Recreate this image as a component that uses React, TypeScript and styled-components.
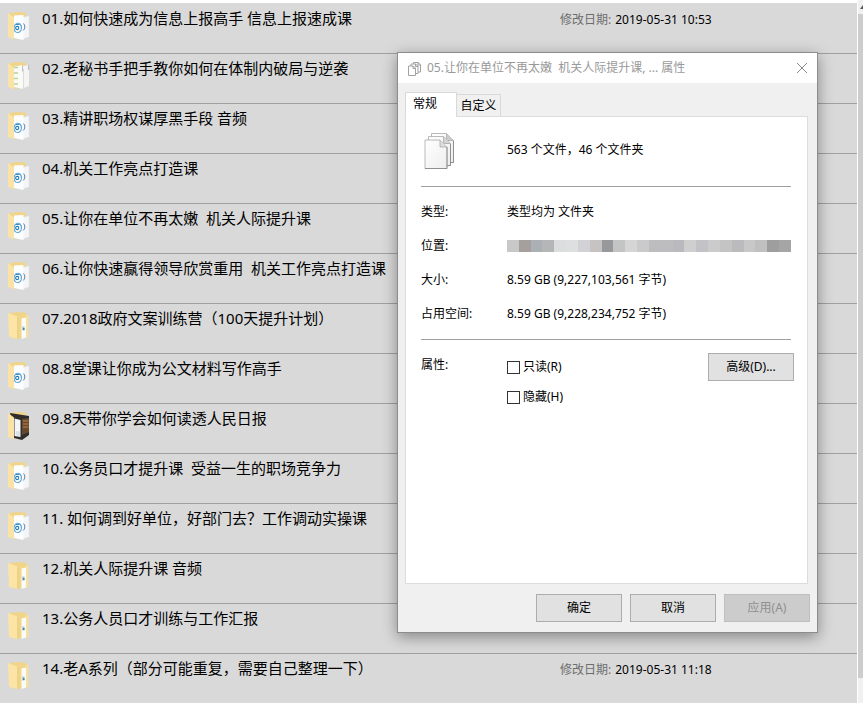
import React from "react";
import styled, { createGlobalStyle } from "styled-components";

const GlobalStyle = createGlobalStyle`
  *, *::before, *::after { box-sizing: border-box; }
  body {
    margin: 0;
    background: #fff;
    color: #000;
    font-family: "Noto Sans", "Noto Sans CJK SC", sans-serif;
    font-size: 12px;
    line-height: 18px;
  }
`;

type FolderKind = "audio" | "list" | "plain" | "dark";

interface Folder {
  name: string;
  kind: FolderKind;
  modified?: string;
}

const folders: Folder[] = [
  { name: "01.如何快速成为信息上报高手 信息上报速成课", kind: "audio", modified: "2019-05-31 10:53" },
  { name: "02.老秘书手把手教你如何在体制内破局与逆袭", kind: "list" },
  { name: "03.精讲职场权谋厚黑手段 音频", kind: "audio" },
  { name: "04.机关工作亮点打造课", kind: "audio" },
  { name: "05.让你在单位不再太嫩  机关人际提升课", kind: "audio" },
  { name: "06.让你快速赢得领导欣赏重用  机关工作亮点打造课", kind: "audio" },
  { name: "07.2018政府文案训练营（100天提升计划）", kind: "plain" },
  { name: "08.8堂课让你成为公文材料写作高手", kind: "audio" },
  { name: "09.8天带你学会如何读透人民日报", kind: "dark" },
  { name: "10.公务员口才提升课  受益一生的职场竞争力", kind: "audio" },
  { name: "11. 如何调到好单位，好部门去？工作调动实操课", kind: "audio" },
  { name: "12.机关人际提升课 音频", kind: "plain" },
  { name: "13.公务人员口才训练与工作汇报", kind: "plain" },
  { name: "14.老A系列（部分可能重复，需要自己整理一下）", kind: "plain", modified: "2019-05-31 11:18" },
];

const mosaic = [
  "#c8c8c8", "#a59f9d", "#aab0b4", "#b5b6b8", "#dcdedd", "#dddfe0", "#d2d2d6", "#c8c3c3",
  "#97989c", "#c4c4c5", "#d5d5d5", "#cacacb", "#bdbdbf", "#bdbdc0", "#b9b9be", "#cfcfcf",
  "#c3c3c7", "#cbcbcb", "#c4c4c5", "#bbbbbd", "#c8c8c9", "#c0c0c0", "#9e9e9e", "#a5a5a5",
];

const Page = styled.main`
  position: relative;
  display: flex;
  min-height: 100vh;
`;

const FileList = styled.ul`
  flex: 1;
  min-width: 0;
  margin: 3px 0 0;
  padding: 0;
  list-style: none;
  background: #d9d9d9;
`;

const FileRow = styled.li`
  display: grid;
  grid-template-columns: 22px minmax(0, 1fr) 297px;
  column-gap: 12px;
  height: 50px;
  padding: 4px 0 0 8px;
  border-top: 1px solid #a0a0a0;

  &:first-child { border-top-color: #d9d9d9; }

  svg { margin-top: 3px; }
`;

const FileName = styled.span`
  font-size: 15px;
  line-height: 20px;
  white-space: pre;
`;

const Modified = styled.span`
  display: flex;
  gap: 4px;
  padding-top: 3px;
  color: #6d6d6d;
  white-space: nowrap;

  time { color: #000; }
`;

const ScrollTrack = styled.div`
  display: flex;
  flex-direction: column;
  width: 6px;
  padding-bottom: 25px;
  border-left: 1px solid #fff;
  background: #f0f0f0;
`;

const ScrollArrow = styled.div`
  display: flex;
  justify-content: flex-end;
  height: 14px;
  padding-top: 5px;
`;

const ScrollThumb = styled.div`
  flex: 1;
  background: #cdcdcd;
`;

const Dialog = styled.section`
  position: absolute;
  top: 52px;
  right: 45px;
  width: 421px;
  border: 1px solid #8c8c8c;
  background: #f0f0f0;
  box-shadow: 0 4px 14px rgba(0, 0, 0, 0.38);
`;

const TitleBar = styled.header`
  display: flex;
  align-items: center;
  gap: 6px;
  height: 30px;
  padding: 0 9px 0 10px;
  background: #fff;
  color: #999;
`;

const Title = styled.h1`
  flex: 1;
  margin: 0;
  font-size: 12px;
  font-weight: 400;
  white-space: pre;
`;

const CloseButton = styled.button`
  display: flex;
  padding: 0;
  border: 0;
  background: none;
`;

const Tabs = styled.div`
  display: flex;
  align-items: flex-end;
  height: 33px;
  padding: 0 7px;
`;

const Tab = styled.button<{ $active?: boolean }>`
  position: relative;
  height: ${(p) => (p.$active ? 25 : 22)}px;
  width: ${(p) => (p.$active ? 52 : 44)}px;
  margin-bottom: ${(p) => (p.$active ? -1 : 0)}px;
  padding: ${(p) => (p.$active ? "0 12px 3px 0" : "0")};
  border: 1px solid #d9d9d9;
  border-bottom: 0;
  border-left-width: ${(p) => (p.$active ? 1 : 0)}px;
  background: ${(p) => (p.$active ? "#fff" : "#f0f0f0")};
  color: #000;
  font: inherit;
`;

const Panel = styled.div`
  min-height: 468px;
  margin: 0 9px 0 7px;
  padding: 0 16px 0 15px;
  border: 1px solid #dcdcdc;
  background: #fff;
`;

const Summary = styled.div`
  display: grid;
  grid-template-columns: 86px 1fr;
  align-items: center;
  height: 70px;
  padding-bottom: 4px;
  border-bottom: 1px solid #a0a0a0;

  svg { margin: 2px 0 0 3px; }
`;

const Details = styled.dl`
  display: grid;
  grid-template-columns: 86px 1fr;
  grid-auto-rows: 34px;
  align-items: center;
  margin: 0;
  padding: 8px 0;
  border-bottom: 1px solid #a0a0a0;

  dd { margin: 0; }
`;

const Mosaic = styled.div`
  display: flex;
  height: 12px;
`;

const MosaicBlock = styled.span<{ $tone: string }>`
  flex: 1;
  background: ${(p) => p.$tone};
`;

const Attributes = styled.fieldset`
  display: grid;
  grid-template-columns: 86px 1fr auto;
  align-items: start;
  margin: 0 -3px 0 0;
  padding: 13px 0 0;
  border: 0;
`;

const AttributeLabel = styled.span`
  padding-top: 3px;
`;

const Checks = styled.div`
  display: grid;
  gap: 12px;
  padding-top: 5px;
`;

const Check = styled.label`
  display: flex;
  align-items: center;
  gap: 3px;
`;

const CheckBox = styled.input`
  appearance: none;
  width: 13px;
  height: 13px;
  margin: 0;
  border: 1px solid #333;
  background: #fff;

  &:checked { background: #333; }
`;

const Button = styled.button`
  width: 86px;
  height: 28px;
  padding: 0;
  border: 1px solid #adadad;
  background: #e1e1e1;
  color: #000;
  font: inherit;

  &:disabled {
    border-color: #bfbfbf;
    background: #ccc;
    color: #8f8f8f;
  }
`;

const Actions = styled.footer`
  display: flex;
  justify-content: flex-end;
  gap: 8px;
  padding: 10px 7px;
`;

function FolderIcon({ kind }: { kind: FolderKind }) {
  return (
    <svg width="22" height="32" viewBox="0 0 22 32" aria-hidden="true">
      <path d="M1 2.500 8 1l9 .5 1 1V26l-12 2z" fill="#f0d48a" />
      {kind === "audio" && (
        <>
          <path d="M14 6.500 21 5V26l-6 2z" fill="#f3f5f8" stroke="#dfe3e8" strokeWidth=".5" />
          <path d="M6 4.500 15.500 4v25L6 27z" fill="#fcfdfe" />
          <path d="M12 13c-3-2-6 .5-6 4s2.500 5.500 5.500 4c2.500-1.500 2.500-6 .5-8" fill="none" stroke="#5ea6d6" strokeWidth="1.100" />
          <path d="M7.500 13.500h4" stroke="#3c91ca" />
          <circle cx="9.200" cy="17" r="1.600" fill="none" stroke="#1f7cc0" strokeWidth="1.100" />
          <path d="M15.500 12.500c1.900 1.500 1.700 5.500-.3 7" fill="none" stroke="#5678a7" strokeWidth=".9" />
        </>
      )}
      {kind === "list" && (
        <>
          <path d="M15 5 21 4v21l-5 2z" fill="#f5f6f4" />
          <path d="M6 5.500 15 4v24l-9-2z" fill="#fafbf7" />
          <path d="M5.500 6.500H10M6 12h4M6 17.500h4M6 23h4" stroke="#b5d894" strokeWidth="1.500" />
          <path d="M14.500 4.500v6M20.500 4v5" stroke="#aaa7bd" strokeWidth=".8" />
          <path d="M15.500 8v20" stroke="#dcdcdc" />
        </>
      )}
      {kind === "plain" && (
        <>
          <path d="M9 6 19 3l1 22-10 3z" fill="#f1d68a" />
          <path d="M13.500 7.500 18 6.500v20l-4.500 1.500z" fill="#fafcfc" />
          <path d="M14 15.500h2.500v4H14z" fill="#a9cfdf" />
          <path d="M15 17h1.500v2H15z" fill="#4f7f9c" />
          <path d="M18 4.500 20.500 4v22L18 27z" fill="#f7dfa0" />
        </>
      )}
      {kind === "dark" && (
        <>
          <path d="M2 2 21 5v19l-7 5-8-2z" fill="#302e2b" />
          <path d="M14 8 21 7v14l-7 3z" fill="#66482d" />
          <path d="M15 10h5.500M15 13h5.500M15 16h5.500" stroke="#bd8448" />
          <path d="M6.500 7.500 12.500 9v17l-6-1z" fill="#f3f5f7" />
          <path d="M8 20 12 20.500V25l-4-.8z" fill="#d8e3ea" />
        </>
      )}
      <path
        d={kind === "plain" ? "M0 2 9.500 5.500V28L1 26z" : "M0 2 6 6.500V28L0 26z"}
        fill={kind === "plain" ? "#fbe4a6" : "#fbe3a8"}
      />
      {kind === "plain" && <path d="M9.800 6v22" stroke="#e4c67b" strokeWidth=".7" />}
    </svg>
  );
}

function SmallPagesIcon() {
  return (
    <svg width="13" height="15" viewBox="0 0 13 15" fill="#fff" stroke="#999" strokeWidth=".9" aria-hidden="true">
      <path d="M5.500 1.500h4.500l2.500 2V11h-7z" />
      <path d="M3 3h4.500L10 5v7.500H3z" />
      <path d="M.5 5H5l2.500 2v7.500h-7z" />
      <path d="M5 5v2.500h2.500M7.500 3v2.500H10M10 1.500v2.500h2.500" fill="none" />
    </svg>
  );
}

function PagesIcon() {
  return (
    <svg width="32" height="38" viewBox="0 0 32 38" stroke="#a8a8a8" strokeWidth=".8" aria-hidden="true">
      <defs>
        <linearGradient id="paper" x1="0" y1="0" x2="1" y2="1">
          <stop offset="0" stopColor="#fff" />
          <stop offset="1" stopColor="#eee" />
        </linearGradient>
      </defs>
      <path d="M7.500 1.500h15l7 7v22h-22z" fill="url(#paper)" />
      <path d="M22.500 1.500v7h7" fill="#ccc" />
      <path d="M4.500 4.500h15l7 7v22h-22z" fill="url(#paper)" />
      <path d="M19.500 4.500v7h7" fill="#d5d5d5" />
      <path d="M1 8h15l7 7v21.500H1z" fill="url(#paper)" />
      <path d="M16 8v7h7" fill="#dedede" />
      <path d="M1 36.500h22V15M26.500 12v21.500h-3M29.500 9v21.500h-3" fill="none" stroke="#858585" />
    </svg>
  );
}

export default function App() {
  return (
    <>
      <GlobalStyle />
      <Page>
        <FileList>
          {folders.map((folder) => (
            <FileRow key={folder.name}>
              <FolderIcon kind={folder.kind} />
              <FileName>{folder.name}</FileName>
              {folder.modified && (
                <Modified>
                  修改日期: <time>{folder.modified}</time>
                </Modified>
              )}
            </FileRow>
          ))}
        </FileList>
        <ScrollTrack>
          <ScrollArrow>
            <svg width="3" height="4" viewBox="0 0 3 4" aria-hidden="true">
              <path d="M0 4 3 0v4z" fill="#555" />
            </svg>
          </ScrollArrow>
          <ScrollThumb />
        </ScrollTrack>

        <Dialog role="dialog" aria-labelledby="dialog-title">
          <TitleBar>
            <SmallPagesIcon />
            <Title id="dialog-title">05.让你在单位不再太嫩  机关人际提升课, ... 属性</Title>
            <CloseButton type="button" aria-label="关闭">
              <svg width="12" height="12" viewBox="0 0 12 12" aria-hidden="true">
                <path d="m1 1 10 10M11 1 1 11" stroke="#888" strokeWidth="1" />
              </svg>
            </CloseButton>
          </TitleBar>
          <Tabs role="tablist">
            <Tab type="button" role="tab" aria-selected="true" $active>常规</Tab>
            <Tab type="button" role="tab" aria-selected="false">自定义</Tab>
          </Tabs>
          <Panel role="tabpanel">
            <Summary>
              <PagesIcon />
              <span>563 个文件，46 个文件夹</span>
            </Summary>
            <Details>
              <dt>类型:</dt>
              <dd>类型均为 文件夹</dd>
              <dt>位置:</dt>
              <dd>
                <Mosaic>
                  {mosaic.map((tone, i) => (
                    <MosaicBlock key={i} $tone={tone} />
                  ))}
                </Mosaic>
              </dd>
              <dt>大小:</dt>
              <dd>8.59 GB (9,227,103,561 字节)</dd>
              <dt>占用空间:</dt>
              <dd>8.59 GB (9,228,234,752 字节)</dd>
            </Details>
            <Attributes aria-label="属性">
              <AttributeLabel>属性:</AttributeLabel>
              <Checks>
                <Check>
                  <CheckBox type="checkbox" />
                  只读(R)
                </Check>
                <Check>
                  <CheckBox type="checkbox" />
                  隐藏(H)
                </Check>
              </Checks>
              <Button type="button">高级(D)...</Button>
            </Attributes>
          </Panel>
          <Actions>
            <Button type="button">确定</Button>
            <Button type="button">取消</Button>
            <Button type="button" disabled>应用(A)</Button>
          </Actions>
        </Dialog>
      </Page>
    </>
  );
}
